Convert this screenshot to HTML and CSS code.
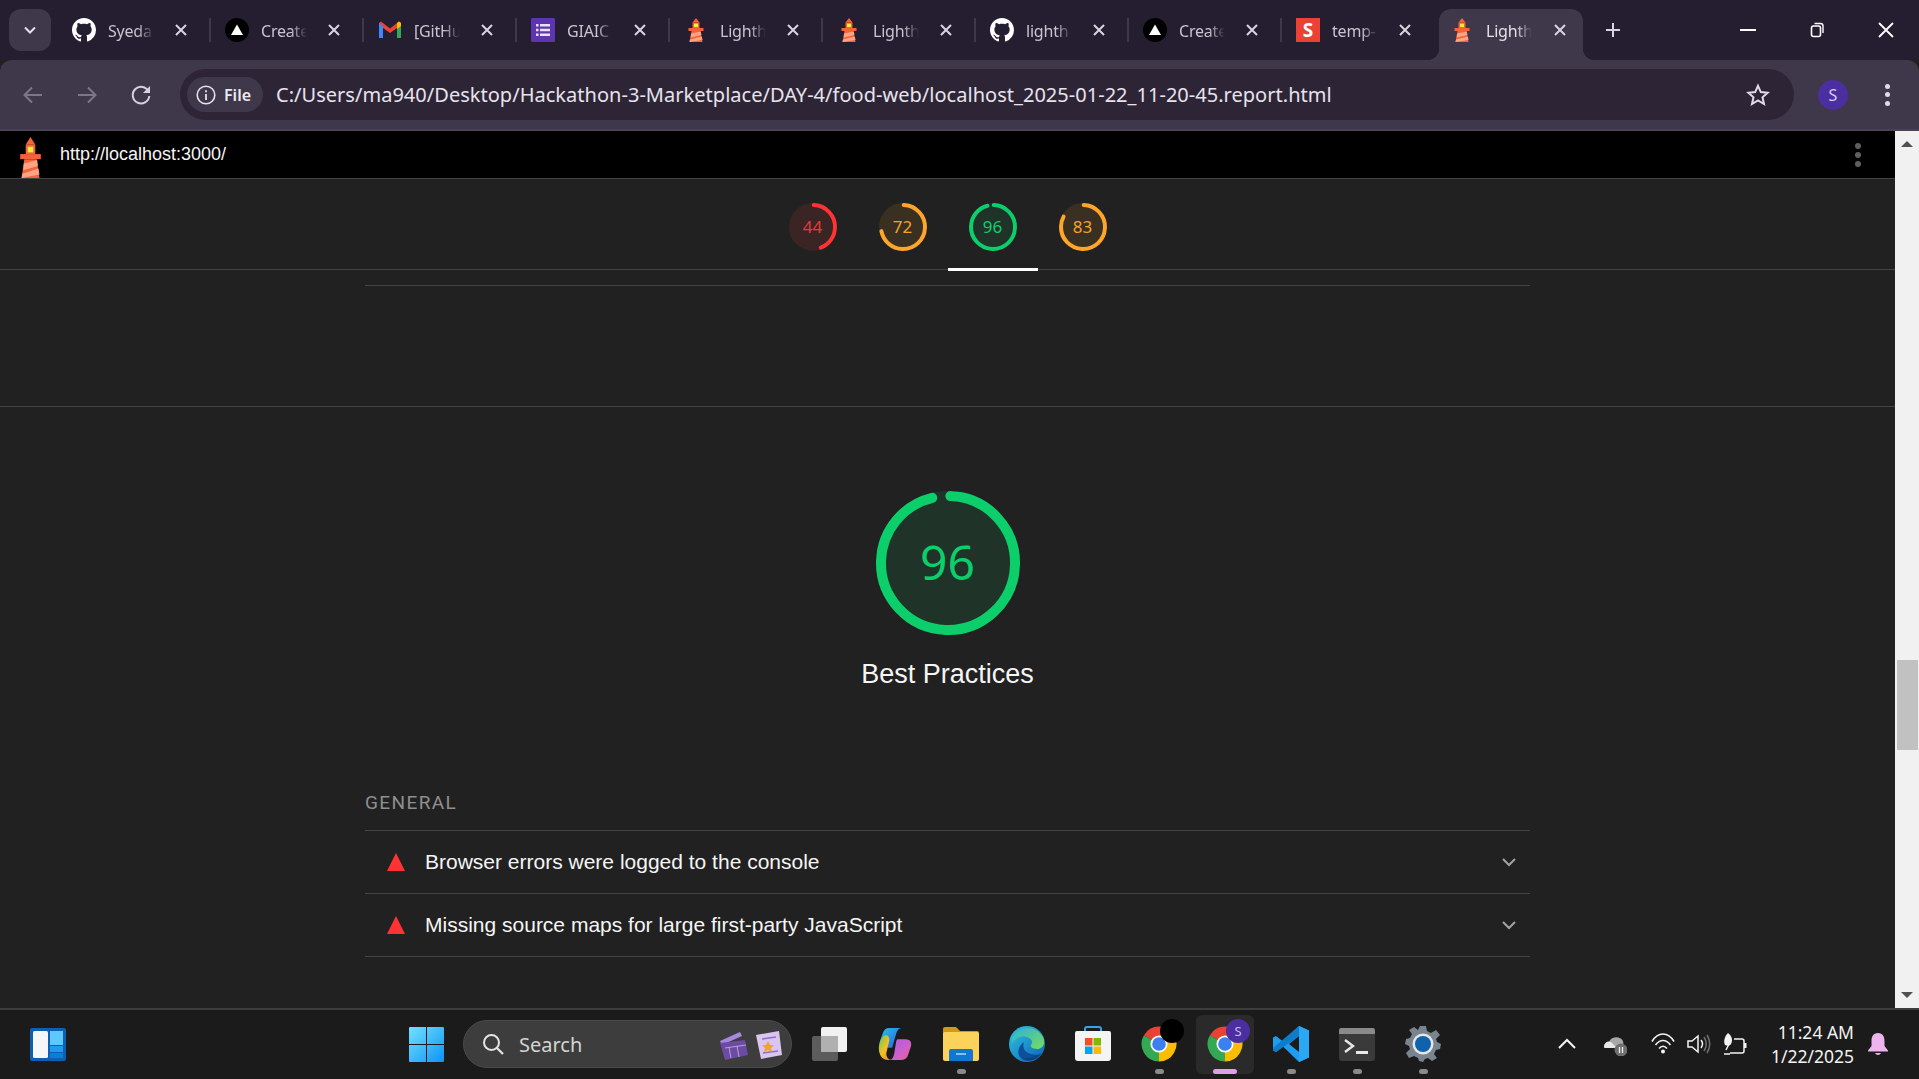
FILE: index.html
```html
<!DOCTYPE html>
<html lang="en">
<head>
    <meta charset="UTF-8">
    <title>Lighthouse Report</title>
    <link rel="stylesheet" href="styles.css">
</head>
<body>

    <!-- shared icons -->
    <svg class="defs" width="0" height="0">
        <symbol id="lighthouse" viewBox="0 0 24 24" preserveAspectRatio="none">
            <polygon points="12,0 15.500,4.500 8.500,4.500" fill="#f4633a"/>
            <rect x="8.500" y="4.500" width="7" height="5.500" fill="#f4633a"/>
            <rect x="10" y="5.700" width="4" height="3.300" fill="#ffeb3b"/>
            <rect x="4.500" y="10" width="15" height="3" fill="#f4633a"/>
            <polygon points="7.500,13 16.500,13 18.500,24 5.500,24" fill="#f4633a"/>
            <polygon points="7.200,15.500 16.800,13.500 17.400,17 6.600,19.500" fill="#ffa385"/>
            <polygon points="6,21.500 17.800,18.500 18.500,22 5.500,24" fill="#ffa385"/>
        </symbol>
        <symbol id="github" viewBox="0 0 16 16">
            <path fill="#fff" d="M8 0C3.58 0 0 3.58 0 8c0 3.54 2.29 6.53 5.47 7.59.4.07.55-.17.55-.38 0-.19-.01-.82-.01-1.49-2.01.37-2.53-.49-2.69-.94-.09-.23-.48-.94-.82-1.13-.28-.15-.68-.52-.01-.53.63-.01 1.08.58 1.23.82.72 1.21 1.87.87 2.33.66.07-.52.28-.87.51-1.07-1.78-.2-3.64-.89-3.64-3.95 0-.87.31-1.59.82-2.15-.08-.2-.36-1.02.08-2.12 0 0 .67-.21 2.2.82.64-.18 1.32-.27 2-.27.68 0 1.36.09 2 .27 1.53-1.04 2.2-.82 2.2-.82.44 1.1.16 1.92.08 2.12.51.56.82 1.27.82 2.15 0 3.07-1.87 3.75-3.65 3.95.29.25.54.73.54 1.48 0 1.07-.01 1.93-.01 2.2 0 .21.15.46.55.38A8.013 8.013 0 0016 8c0-4.42-3.58-8-8-8z"/>
        </symbol>
        <symbol id="vercel" viewBox="0 0 24 24">
            <circle cx="12" cy="12" r="12" fill="#000"/>
            <polygon points="12,6.500 18,17 6,17" fill="#fff"/>
        </symbol>
        <symbol id="close" viewBox="0 0 14 14">
            <path d="M2 2 12 12M12 2 2 12" stroke="#d9d4df" stroke-width="2" fill="none"/>
        </symbol>
        <symbol id="chrome" viewBox="0 0 24 24">
            <path d="M12 12 21.53 6.500A11 11 0 0 0 2.47 6.500Z" fill="#e94235"/>
            <path d="M12 12 2.47 6.500A11 11 0 0 0 12 23Z" fill="#34a853"/>
            <path d="M12 12 12 23A11 11 0 0 0 21.53 6.500Z" fill="#fbbc04"/>
            <circle cx="12" cy="12" r="5.400" fill="#fff"/>
            <circle cx="12" cy="12" r="4.300" fill="#3b7ff0"/>
        </symbol>
    </svg>

    <!-- Tab strip -->
    <div class="tabstrip">
        <button class="tab-menu">
            <svg width="16" height="16" viewBox="0 0 16 16"><path d="M3 5.500 8 10.500 13 5.500" stroke="#e6e1ea" stroke-width="2" fill="none"/></svg>
        </button>
        <div class="tab">
            <svg class="fav"><use href="#github"/></svg><span class="tab-title">Syeda</span>
            <svg class="tab-x"><use href="#close"/></svg>
        </div>
        <div class="tab">
            <svg class="fav"><use href="#vercel"/></svg><span class="tab-title">Create</span>
            <svg class="tab-x"><use href="#close"/></svg>
        </div>
        <div class="tab">
            <svg class="fav" viewBox="0 0 24 24">
                <path d="M1 5V20H5V10L12 15 19 10V20H23V5L21 3.500 12 10.500 3 3.500Z" fill="#ea4335"/>
                <path d="M1 5 1 20H5V8Z" fill="#4285f4"/>
                <path d="M23 5V20H19V8Z" fill="#34a853"/>
                <path d="M19 8 19 5 21 3.500 23 5 23 8 19 11Z" fill="#fbbc04"/>
            </svg><span class="tab-title">[GitHu</span>
            <svg class="tab-x"><use href="#close"/></svg>
        </div>
        <div class="tab">
            <svg class="fav" viewBox="0 0 24 24">
                <rect width="24" height="24" rx="1.500" fill="#5e35b1"/>
                <path d="M5 6h2.500v2.500H5ZM9 6h10v2.500H9ZM5 10.700h2.500v2.500H5ZM9 10.700h10v2.500H9ZM5 15.500h2.500V18H5ZM9 15.500h10V18H9Z" fill="#e8e2f5"/>
            </svg><span class="tab-title">GIAIC</span>
            <svg class="tab-x"><use href="#close"/></svg>
        </div>
        <div class="tab">
            <svg class="fav"><use href="#lighthouse"/></svg><span class="tab-title">Lighth</span>
            <svg class="tab-x"><use href="#close"/></svg>
        </div>
        <div class="tab">
            <svg class="fav"><use href="#lighthouse"/></svg><span class="tab-title">Lighth</span>
            <svg class="tab-x"><use href="#close"/></svg>
        </div>
        <div class="tab">
            <svg class="fav"><use href="#github"/></svg><span class="tab-title">lighth</span>
            <svg class="tab-x"><use href="#close"/></svg>
        </div>
        <div class="tab">
            <svg class="fav"><use href="#vercel"/></svg><span class="tab-title">Create</span>
            <svg class="tab-x"><use href="#close"/></svg>
        </div>
        <div class="tab tab-plain">
            <span class="fav fav-s">S</span><span class="tab-title">temp-</span>
            <svg class="tab-x"><use href="#close"/></svg>
        </div>
        <div class="tab tab-active">
            <svg class="fav"><use href="#lighthouse"/></svg><span class="tab-title">Lighth</span>
            <svg class="tab-x"><use href="#close"/></svg>
        </div>
        <svg class="tab-new" width="18" height="18" viewBox="0 0 18 18"><path d="M9 2V16M2 9H16" stroke="#d9d4df" stroke-width="2"/></svg>

        <div class="win-controls">
            <svg width="16" height="16" viewBox="0 0 16 16"><path d="M0 8H16" stroke="#fff" stroke-width="2"/></svg>
            <svg width="16" height="16" viewBox="0 0 16 16"><rect x="2.500" y="4" width="9" height="10.500" rx="2" stroke="#fff" stroke-width="1.600" fill="none"/><path d="M5.500 1.500H11.500Q14 1.500 14 4V11" stroke="#fff" stroke-width="1.400" fill="none"/></svg>
            <svg width="16" height="16" viewBox="0 0 16 16"><path d="M1 1 15 15M15 1 1 15" stroke="#fff" stroke-width="1.800"/></svg>
        </div>
    </div>

    <!-- Toolbar -->
    <div class="toolbar">
        <div class="nav-btn">
            <svg width="24" height="24" viewBox="0 0 24 24"><path d="M21 12H4M11 4.500 3.500 12 11 19.500" stroke="#7d7688" stroke-width="2" fill="none"/></svg>
        </div>
        <div class="nav-btn">
            <svg width="24" height="24" viewBox="0 0 24 24"><path d="M3 12H20M13 4.500 20.500 12 13 19.500" stroke="#7d7688" stroke-width="2" fill="none"/></svg>
        </div>
        <div class="nav-btn">
            <svg width="24" height="24" viewBox="0 0 24 24"><path d="M19.500 8.500A8.300 8.300 0 1 0 20.300 13" stroke="#d8d2e0" stroke-width="2" fill="none"/><path d="M21 3V10H14Z" fill="#d8d2e0"/></svg>
        </div>
        <div class="omnibox">
            <div class="chip">
                <svg width="20" height="20" viewBox="0 0 20 20"><circle cx="10" cy="10" r="8.800" stroke="#e6e1ea" stroke-width="1.600" fill="none"/><path d="M10 9V15M10 5.200V7.200" stroke="#e6e1ea" stroke-width="1.800"/></svg>
                <span>File</span>
            </div>
            <span class="url">C:/Users/ma940/Desktop/Hackathon-3-Marketplace/DAY-4/food-web/localhost_2025-01-22_11-20-45.report.html</span>
            <svg class="star" width="24" height="24" viewBox="0 0 24 24"><path d="M12 2.800 14.800 9.100 21.600 9.800 16.500 14.300 18 21 12 17.500 6 21 7.500 14.300 2.400 9.800 9.200 9.100Z" stroke="#e0dbe6" stroke-width="2" fill="none"/></svg>
        </div>
        <div class="avatar">S</div>
        <div class="kebab kebab-light"><i></i><i></i><i></i></div>
    </div>

    <!-- Page + scrollbar -->
    <div class="viewport">
        <div class="page">
            <div class="lh-top">
                <svg class="lh-logo"><use href="#lighthouse"/></svg>
                <span class="lh-url">http://localhost:3000/</span>
                <div class="kebab kebab-dim"><i></i><i></i><i></i></div>
            </div>

            <nav class="score-nav">
                <a class="score-tab">
                    <div class="gauge gauge-sm fail">
                        <svg viewBox="0 0 48 48"><circle class="base" cx="24" cy="24" r="22"/><circle class="arc" cx="24" cy="24" r="22" stroke-dasharray="60 200"/></svg>
                        <span>44</span>
                    </div>
                </a>
                <a class="score-tab">
                    <div class="gauge gauge-sm avg">
                        <svg viewBox="0 0 48 48"><circle class="base" cx="24" cy="24" r="22"/><circle class="arc" cx="24" cy="24" r="22" stroke-dasharray="98 200"/></svg>
                        <span>72</span>
                    </div>
                </a>
                <a class="score-tab current">
                    <div class="gauge gauge-sm pass">
                        <svg viewBox="0 0 48 48"><circle class="base" cx="24" cy="24" r="22"/><circle class="arc" cx="24" cy="24" r="22" stroke-dasharray="131 200"/></svg>
                        <span>96</span>
                    </div>
                </a>
                <a class="score-tab">
                    <div class="gauge gauge-sm avg">
                        <svg viewBox="0 0 48 48"><circle class="base" cx="24" cy="24" r="22"/><circle class="arc" cx="24" cy="24" r="22" stroke-dasharray="113 200"/></svg>
                        <span>83</span>
                    </div>
                </a>
            </nav>

            <div class="prev-end"><div class="prev-line"></div></div>

            <section class="category">
                <div class="gauge gauge-lg pass">
                    <svg viewBox="0 0 144 144"><circle class="base" cx="72" cy="72" r="67"/><circle class="arc" cx="72" cy="72" r="67" stroke-dasharray="402 500"/></svg>
                    <span>96</span>
                </div>
                <h2 class="cat-title">Best Practices</h2>

                <div class="audits">
                    <div class="group-title">GENERAL</div>
                    <div class="audit">
                        <i class="tri"></i>
                        <span>Browser errors were logged to the console</span>
                        <svg class="chev" width="14" height="10" viewBox="0 0 14 10"><path d="M1 2 7 8 13 2" stroke="#a3a3a3" stroke-width="2" fill="none"/></svg>
                    </div>
                    <div class="audit">
                        <i class="tri"></i>
                        <span>Missing source maps for large first-party JavaScript</span>
                        <svg class="chev" width="14" height="10" viewBox="0 0 14 10"><path d="M1 2 7 8 13 2" stroke="#a3a3a3" stroke-width="2" fill="none"/></svg>
                    </div>
                </div>
            </section>
        </div>

        <div class="scrollbar">
            <div class="sb-btn"><i class="sb-up"></i></div>
            <div class="sb-thumb"></div>
            <div class="sb-btn sb-end"><i class="sb-down"></i></div>
        </div>
    </div>

    <!-- Windows taskbar -->
    <div class="taskbar">
        <svg class="widgets" width="36" height="33" viewBox="0 0 36 33">
            <rect width="36" height="33" rx="2" fill="#0d5fb3"/>
            <rect x="3" y="3" width="15" height="27" rx="1.500" fill="#f4f6f8"/>
            <rect x="20" y="3" width="13" height="14" fill="#5fc8fa"/>
            <rect x="20" y="18" width="13" height="6" fill="#1f9bec"/>
            <rect x="20" y="25" width="13" height="5" fill="#0a7fd8"/>
        </svg>

        <div class="task-slot">
            <svg width="35" height="35" viewBox="0 0 35 35">
                <defs><linearGradient id="winblue" x1="0" y1="0" x2="1" y2="1"><stop offset="0" stop-color="#6fe2ff"/><stop offset="1" stop-color="#0f93f5"/></linearGradient></defs>
                <path d="M0 1Q0 0 1 0H17V17H0ZM18 0H34Q35 0 35 1V17H18ZM0 18H17V35H1Q0 35 0 34ZM18 18H35V34Q35 35 34 35H18Z" fill="url(#winblue)"/>
            </svg>
        </div>

        <div class="search">
            <svg width="24" height="24" viewBox="0 0 24 24"><circle cx="10.500" cy="10.500" r="7.500" stroke="#e4e4e4" stroke-width="2" fill="none"/><path d="M16 16 22 22" stroke="#e4e4e4" stroke-width="2.200"/></svg>
            <span>Search</span>
            <svg class="search-art" width="68" height="34" viewBox="0 0 68 34">
                <path d="M4 14 24 5 26 9 6 18Z" fill="#a888dd"/>
                <path d="M4 16 29 13 32 28 9 33Z" fill="#6d4ba3"/>
                <path d="M9 21 30 18M13 20 15 31M21 19 23 30" stroke="#b7a2dc" stroke-width="1"/>
                <path d="M40 8 63 4 66 28 45 32Z" fill="#d9c6ef"/>
                <path d="M46 12 60 10M47 26 62 24" stroke="#8e70c0" stroke-width="1.500"/>
                <path d="M52 14 54 18 58 18 55 21 56 25 52 23 48 25 49 21 46 18 50 18Z" fill="#f2a51f"/>
            </svg>
        </div>

        <div class="task-slot">
            <svg width="36" height="36" viewBox="0 0 36 36">
                <rect x="1" y="10" width="26" height="25" rx="2" fill="#5c5c5c"/>
                <rect x="10" y="1" width="26" height="25" rx="2" fill="#f2f2f2"/>
                <rect x="10" y="10" width="17" height="16" fill="#b0b0b0"/>
            </svg>
        </div>
        <div class="task-slot">
            <svg width="34" height="34" viewBox="0 0 36 36">
                <defs>
                    <linearGradient id="cpa" x1="0" y1="0" x2="1" y2="1"><stop offset="0" stop-color="#27c0e8"/><stop offset="1" stop-color="#2a5ee0"/></linearGradient>
                    <linearGradient id="cpb" x1="0" y1="0" x2="1" y2="1"><stop offset="0" stop-color="#5fc86a"/><stop offset=".5" stop-color="#f4c21c"/><stop offset="1" stop-color="#f06a3a"/></linearGradient>
                    <linearGradient id="cpc" x1="0" y1="0" x2="1" y2="1"><stop offset="0" stop-color="#a85be8"/><stop offset=".6" stop-color="#d060c8"/><stop offset="1" stop-color="#f2607a"/></linearGradient>
                </defs>
                <path d="M12 1H25C22 1 20 4 19 8L15 22H7C3 22 1 19 2 15L5 7C6 3 8 1 12 1Z" fill="url(#cpa)"/>
                <path d="M7 9C10 8 12 10 12 14L9 27C8 31 11 35 15 35H11C4 35 0 28 1 20 2 15 4 10 7 9Z" fill="url(#cpb)"/>
                <path d="M21 13H29C34 13 36 16 35 20L32 29C31 33 28 35 24 35H12C14 35 16 33 17 29L19 17C19 15 20 13 21 13Z" fill="url(#cpc)"/>
            </svg>
        </div>
        <div class="task-slot has-dot">
            <svg width="36" height="34" viewBox="0 0 36 34">
                <path d="M0 2Q0 0 2 0H13L17 4H34Q36 4 36 6V10H0Z" fill="#d39a0e"/>
                <rect y="5" width="36" height="29" rx="2" fill="#fcd35a"/>
                <path d="M6 24Q6 22 8 22H28Q30 22 30 24V34H6Z" fill="#1078d0"/>
                <rect x="13" y="26" width="10" height="2" fill="#7cc3f2"/>
            </svg>
        </div>
        <div class="task-slot">
            <svg width="36" height="36" viewBox="0 0 36 36">
                <defs>
                    <linearGradient id="edgeb" x1="0" y1="0" x2="1" y2="1"><stop offset="0" stop-color="#2fc4e0"/><stop offset="1" stop-color="#0b62b6"/></linearGradient>
                    <linearGradient id="edgeg" x1="0" y1="0" x2="1" y2="1"><stop offset="0" stop-color="#2cb3d8"/><stop offset="1" stop-color="#79dc5c"/></linearGradient>
                </defs>
                <circle cx="18" cy="18" r="18" fill="url(#edgeb)"/>
                <path d="M3 12C7 1 26-3 34 11 37 17 34 23 28 23 23 23 20 21 23 17 24 13 17 9 11 11 7 12 4 15 3 18Z" fill="url(#edgeg)"/>
                <path d="M32 28C27 35 18 37 13 33 7 29 9 20 15 16 13 22 16 27 22 28 26 29 30 29 32 28Z" fill="#0c4f9a"/>
                <path d="M33 27C28 34 19 36 14 32 19 33 26 31 33 27Z" fill="#1b1b1b" opacity=".25"/>
            </svg>
        </div>
        <div class="task-slot">
            <svg width="36" height="36" viewBox="0 0 36 36">
                <path d="M10 7V3Q10 1 12 1H24Q26 1 26 3V7" stroke="#3aa0e8" stroke-width="2" fill="none"/>
                <path d="M2 5H34Q36 5 36 7V32Q36 35 33 35H3Q0 35 0 32V7Q0 5 2 5Z" fill="#f4f4f4"/>
                <rect x="10" y="12" width="7.500" height="7.500" fill="#f25022"/>
                <rect x="18.500" y="12" width="7.500" height="7.500" fill="#7fba00"/>
                <rect x="10" y="20.500" width="7.500" height="7.500" fill="#00a4ef"/>
                <rect x="18.500" y="20.500" width="7.500" height="7.500" fill="#ffb900"/>
            </svg>
        </div>
        <div class="task-slot has-dot">
            <div class="chrome-wrap">
                <svg class="chrome-ic"><use href="#chrome"/></svg>
                <i class="badge badge-black"></i>
            </div>
        </div>
        <div class="task-slot slot-active">
            <div class="chrome-wrap">
                <svg class="chrome-ic"><use href="#chrome"/></svg>
                <i class="badge badge-s">S</i>
            </div>
        </div>
        <div class="task-slot has-dot">
            <svg width="36" height="36" viewBox="0 0 36 36">
                <path d="M26 0 36 4.500V31.500L26 36 10 20.500 3 26 0 24.500V11.500L3 10 10 15.500ZM26 10 16 18 26 26Z" fill="#1f9cf0"/>
                <path d="M26 0V10L3 26 0 24.500V22Z" fill="#0e7dc9"/>
                <path d="M36 4.500V31.500L26 36V0Z" fill="#2aa7f5"/>
            </svg>
        </div>
        <div class="task-slot has-dot">
            <svg width="36" height="33" viewBox="0 0 36 33">
                <rect width="36" height="33" rx="3" fill="#3a3a3a"/>
                <path d="M2 0H34Q36 0 36 3V6H0V3Q0 0 2 0Z" fill="#8a8a8a"/>
                <path d="M6 12 14 18 6 24" stroke="#e8e8e8" stroke-width="2.400" fill="none"/>
                <rect x="17" y="23" width="12" height="3" fill="#e8e8e8"/>
            </svg>
        </div>
        <div class="task-slot has-dot">
            <svg width="36" height="36" viewBox="0 0 36 36">
                <path d="M15 0H21L22 5 26 7 31 4 35 9 31 13 32 16 36 18 35 23 31 24 29 28 32 32 27 35 23 32 20 33 18 36 14 35 13 32 9 30 4 32 1 27 5 23 4 20 0 18 1 13 5 12 7 8 4 4 9 1 13 4Z" fill="#79848f"/>
                <circle cx="18" cy="18" r="10.500" fill="#e6e6e6"/>
                <circle cx="18" cy="18" r="8" fill="#0f62ac"/>
            </svg>
        </div>

        <div class="tray">
            <svg class="tray-ic" viewBox="0 0 24 24"><path d="M4 16 12 8 20 16" stroke="#f4f4f4" stroke-width="2" fill="none"/></svg>
            <svg class="tray-ic tray-far" viewBox="0 0 24 24">
                <path d="M1 15A5 5 0 0 1 6 10 8 8 0 0 1 20 9L21 16H3Q1 16 1 15Z" fill="#a8a8a8"/>
                <path d="M1 15A5 5 0 0 1 8 10L14 16H3Q1 16 1 15Z" fill="#e8e8e8"/>
                <circle cx="18" cy="18" r="6.500" fill="#6f6f6f"/>
                <path d="M16.500 15V21M19.500 15V21" stroke="#f0f0f0" stroke-width="1.300"/>
            </svg>
            <svg class="tray-ic tray-far" viewBox="0 0 24 24">
                <path d="M1 9.500C7-.5 17-.5 23 9.500M4.500 13C9 7 15 7 19.500 13M8 16.500C10.500 13.500 13.500 13.500 16 16.500" stroke="#f4f4f4" stroke-width="1.600" fill="none"/>
                <circle cx="12" cy="19.500" r="2" fill="#f4f4f4"/>
            </svg>
            <svg class="tray-ic" viewBox="0 0 24 24">
                <path d="M1 9H5L11 4V20L5 15H1Z" stroke="#f4f4f4" stroke-width="1.500" fill="none"/>
                <path d="M14 8Q17 12 14 16" stroke="#f4f4f4" stroke-width="1.500" fill="none"/>
                <path d="M17 5Q21.500 12 17 19M20 3Q25.500 12 20 21" stroke="#707070" stroke-width="1.500" fill="none"/>
            </svg>
            <svg class="tray-ic" viewBox="0 0 24 24">
                <path d="M7 21H19Q21 21 21 19V9Q21 7 19 7H11" stroke="#f4f4f4" stroke-width="1.500" fill="none"/>
                <rect x="21" y="11" width="2.500" height="5" fill="#f4f4f4"/>
                <path d="M5 1C9 4 10 8 8 12 7 14 4 14 2 13 0 9 2 4 5 1Z" fill="#f4f4f4"/>
                <path d="M1 22 H7 M3 18 7 10" stroke="#f4f4f4" stroke-width="1.500"/>
            </svg>
            <div class="clock">
                <span>11:24 AM</span>
                <span>1/22/2025</span>
            </div>
            <svg class="tray-ic" viewBox="0 0 24 24">
                <path d="M12 1C7 1 5.500 5 5.500 9V14L2 18.500V19.500H22V18.500L18.500 14V9C18.500 5 17 1 12 1Z" fill="#efb3ee"/>
                <path d="M9 21H15Q14 23 12 23 10 23 9 21Z" fill="#efb3ee"/>
            </svg>
        </div>
    </div>

</body>
</html>
```

FILE: styles.css
```css
* {
    margin: 0;
    padding: 0;
    box-sizing: border-box;
}

html, body {
    width: 1919px;
    height: 1079px;
    overflow: hidden;
    background-color: #212121;
    font-family: 'Noto Sans', sans-serif;
    display: flex;
    flex-direction: column;
}

.defs {
    position: absolute;
}

/* ---- tab strip ---- */
.tabstrip {
    height: 60px;
    flex: none;
    background-color: #241e30;
    display: flex;
    align-items: center;
}

.tab-menu {
    width: 42px;
    height: 42px;
    margin: 0 7px 0 9px;
    border: none;
    border-radius: 12px;
    background-color: #3f384a;
    display: flex;
    align-items: center;
    justify-content: center;
}

.tab {
    width: 153px;
    height: 24px;
    padding: 0 21px 0 14px;
    border-right: 2px solid #3f384a;
    display: flex;
    align-items: center;
    flex: none;
}

.tab-plain {
    border-right-color: transparent;
}

.fav {
    width: 24px;
    height: 24px;
    flex: none;
    margin-right: 12px;
}

.fav-s {
    background-color: #ea4335;
    color: #fff;
    font-weight: 700;
    font-size: 19px;
    line-height: 24px;
    text-align: center;
}

.tab-title {
    width: 46px;
    margin-top: 2px;
    white-space: nowrap;
    font-size: 16px;
    letter-spacing: -0.2px;
    line-height: 24px;
    color: #c9c4cf;
    -webkit-mask-image: linear-gradient(90deg, #000 65%, transparent);
    mask-image: linear-gradient(90deg, #000 65%, transparent);
}

.tab-x {
    width: 14px;
    height: 14px;
    margin-left: auto;
    flex: none;
}

.tab-active {
    position: relative;
    width: 144px;
    height: 51px;
    margin: 9px 5px 0 4px;
    padding: 0 16px 0 11px;
    border: none;
    border-radius: 12px 12px 0 0;
    background-color: #3f384a;
    padding-bottom: 9px;
}

.tab-active::before,
.tab-active::after {
    content: "";
    position: absolute;
    bottom: 0;
    width: 12px;
    height: 12px;
}

.tab-active::before {
    left: -12px;
    background: radial-gradient(circle at 0 0, transparent 12px, #3f384a 12.5px);
}

.tab-active::after {
    right: -12px;
    background: radial-gradient(circle at 100% 0, transparent 12px, #3f384a 12.5px);
}

.tab-active .tab-title {
    color: #e4e0e9;
}

.tab-new {
    margin-left: 16px;
}

.win-controls {
    margin-left: auto;
    padding-right: 25px;
    display: flex;
    gap: 53px;
}

/* ---- toolbar ---- */
.toolbar {
    height: 71px;
    flex: none;
    background-color: #3f384a;
    border-bottom: 2px solid #4a4356;
    border-radius: 12px 12px 0 0;
    padding: 0 29px 0 6px;
    display: flex;
    align-items: center;
}

.nav-btn {
    width: 54px;
    display: flex;
    justify-content: center;
}

.omnibox {
    flex: 1;
    height: 51px;
    margin-left: 12px;
    border-radius: 26px;
    background-color: #2d2536;
    display: flex;
    align-items: center;
}

.chip {
    width: 76px;
    height: 35px;
    margin-left: 7px;
    border-radius: 18px;
    background-color: #3f384a;
    display: flex;
    align-items: center;
    padding-left: 9px;
    gap: 8px;
    color: #ece8f0;
    font-size: 16px;
    font-weight: 600;
}

.url {
    margin-left: 13px;
    font-size: 20px;
    letter-spacing: 0.025px;
    color: #e7e3ec;
    white-space: nowrap;
}

.star {
    margin-left: auto;
    margin-right: 24px;
}

.avatar {
    width: 30px;
    height: 30px;
    margin-left: 24px;
    border-radius: 50%;
    background-color: #4b2ea0;
    color: #d8cdf5;
    font-size: 16px;
    line-height: 30px;
    text-align: center;
}

.kebab {
    display: flex;
    flex-direction: column;
}

.kebab i {
    display: block;
    border-radius: 50%;
}

.kebab-light {
    margin-left: 37px;
    gap: 3.5px;
}

.kebab-light i {
    width: 5px;
    height: 5px;
    background-color: #e0dbe6;
}

.kebab-dim {
    margin-left: auto;
    margin-right: 34px;
    gap: 3px;
}

.kebab-dim i {
    width: 6px;
    height: 6px;
    background-color: #5f5f5f;
}

/* ---- report page ---- */
.viewport {
    height: 877px;
    flex: none;
    display: flex;
}

.page {
    flex: 1;
    min-width: 0;
    background-color: #212121;
}

.lh-top {
    height: 48px;
    background-color: #000;
    border-bottom: 1px solid #444;
    overflow: hidden;
    display: flex;
    align-items: center;
    padding-left: 14px;
}

.lh-logo {
    width: 33px;
    height: 41px;
    align-self: flex-start;
    margin-top: 6px;
    flex: none;
}

.lh-url {
    margin-left: 13px;
    font-family: 'Liberation Sans', Arial, sans-serif;
    font-size: 18px;
    color: #f5f5f5;
}

.score-nav {
    height: 91px;
    border-bottom: 1px solid #444;
    display: flex;
    justify-content: center;
}

.score-tab {
    width: 90px;
    height: 92px;
    padding-top: 24px;
    display: flex;
    justify-content: center;
}

.score-tab.current {
    border-bottom: 3px solid #fff;
}

.gauge {
    display: grid;
    place-items: center;
    flex: none;
}

.gauge > * {
    grid-area: 1 / 1;
}

.gauge span {
    position: relative;
    z-index: 1;
}

.gauge svg {
    width: 100%;
    height: 100%;
    transform: rotate(-88deg);
}

.gauge circle {
    fill: none;
}

.gauge-sm {
    width: 48px;
    height: 48px;
    font-size: 17px;
}

.gauge-sm span {
    margin-bottom: 1px;
}

.gauge-sm circle.arc {
    stroke-width: 4;
    stroke-linecap: round;
}

.gauge-sm circle.base {
    stroke-width: 4;
}

.gauge-lg {
    width: 144px;
    height: 144px;
    margin: 0 auto;
    font-size: 48px;
}

.gauge-lg span {
    margin-bottom: 4px;
}

.gauge-lg circle.arc {
    stroke-width: 10;
    stroke-linecap: round;
}

.gauge-lg circle.base {
    stroke-width: 10;
}

.fail { color: #e53935; }
.fail circle.base { fill: #3a2424; stroke: #3a2424; }
.fail circle.arc { stroke: #ff3333; fill: none; }

.avg { color: #f4a32a; }
.avg circle.base { fill: #3a3022; stroke: #3a3022; }
.avg circle.arc { stroke: #ffa52a; fill: none; }

.pass { color: #0cce6b; }
.pass circle.base { fill: #1f3329; stroke: #1f3329; }
.pass circle.arc { stroke: #0cce6b; fill: none; }

.prev-end {
    height: 137px;
    border-bottom: 1px solid #444;
}

.prev-line {
    width: 1165px;
    height: 16px;
    margin: 0 auto;
    border-bottom: 1px solid #444;
}

.category {
    padding-top: 84px;
}

.cat-title {
    margin-top: 19px;
    font-family: 'Liberation Sans', Arial, sans-serif;
    font-size: 27px;
    font-weight: 400;
    line-height: 40px;
    color: #f5f5f5;
    text-align: center;
}

.audits {
    width: 1165px;
    margin: 100px auto 0;
}

.group-title {
    height: 37px;
    font-family: Roboto, sans-serif;
    font-size: 19px;
    line-height: 18px;
    letter-spacing: 1.4px;
    color: #8f8f8f;
    border-bottom: 1px solid #444;
}

.audit {
    height: 63px;
    padding: 0 14px 0 22px;
    border-bottom: 1px solid #444;
    display: flex;
    align-items: center;
    font-family: 'Liberation Sans', Arial, sans-serif;
    font-size: 21px;
    color: #f5f5f5;
}

.tri {
    width: 0;
    height: 0;
    margin-right: 20px;
    border-left: 9px solid transparent;
    border-right: 9px solid transparent;
    border-bottom: 18px solid #ff3333;
}

.chev {
    margin-left: auto;
}

/* ---- page scrollbar ---- */
.scrollbar {
    width: 24px;
    background-color: #f1f1f1;
    display: flex;
    flex-direction: column;
    align-items: center;
}

.sb-btn {
    height: 26px;
    flex: none;
    display: flex;
    align-items: center;
    justify-content: center;
}

.sb-end {
    margin-top: auto;
}

.sb-up, .sb-down {
    width: 0;
    height: 0;
    border-left: 6px solid transparent;
    border-right: 6px solid transparent;
}

.sb-up {
    border-bottom: 6px solid #505050;
}

.sb-down {
    border-top: 6px solid #505050;
}

.sb-thumb {
    width: 21px;
    height: 90px;
    margin-top: 503px;
    background-color: #c1c1c1;
}

/* ---- taskbar ---- */
.taskbar {
    height: 71px;
    flex: none;
    background-color: #1b1b1b;
    border-top: 2px solid #3d3d3d;
    padding-bottom: 1px;
    display: flex;
    align-items: center;
}

.widgets {
    margin: 0 327px 0 30px;
    flex: none;
}

.task-slot {
    position: relative;
    width: 66px;
    height: 59px;
    flex: none;
    display: flex;
    align-items: center;
    justify-content: center;
}

.has-dot::after {
    content: "";
    position: absolute;
    left: 29px;
    bottom: 0;
    width: 9px;
    height: 5px;
    border-radius: 3px;
    background-color: #8a8a8a;
}

.slot-active::before {
    content: "";
    position: absolute;
    left: 4px;
    right: 4px;
    top: 0;
    bottom: 0;
    border-radius: 6px;
    background-color: #2a2a2a;
}

.slot-active::after {
    content: "";
    position: absolute;
    left: 21px;
    bottom: 0;
    width: 24px;
    height: 5px;
    border-radius: 3px;
    background-color: #dda0e6;
}

.search {
    width: 329px;
    height: 48px;
    margin: 0 4px;
    flex: none;
    border-radius: 24px;
    background-color: #3d3d3d;
    border: 1px solid #4a4a4a;
    display: flex;
    align-items: center;
    padding-left: 17px;
    color: #d4d4d4;
    font-size: 20px;
}

.search span {
    margin-left: 14px;
}

.search-art {
    margin-left: auto;
    margin-right: 7px;
}

.chrome-wrap {
    position: relative;
    width: 36px;
    height: 36px;
}

.chrome-ic {
    width: 38px;
    height: 38px;
    margin: -1px;
    display: block;
}

.badge {
    position: absolute;
    top: -7px;
    right: -7px;
    width: 24px;
    height: 24px;
    border-radius: 50%;
    font-style: normal;
    font-size: 13px;
    line-height: 24px;
    text-align: center;
}

.badge-black {
    background-color: #000;
}

.badge-s {
    background-color: #4b2ea0;
    color: #c9b8f0;
}

.tray {
    margin-left: auto;
    padding-right: 29px;
    display: flex;
    align-items: center;
    gap: 12px;
}

.tray-ic {
    width: 24px;
    height: 24px;
    flex: none;
}

.tray-far {
    margin-left: 12px;
}

.clock {
    width: 95px;
    display: flex;
    flex-direction: column;
    align-items: flex-end;
    font-size: 17.5px;
    line-height: 24px;
    color: #f2f2f2;
    white-space: nowrap;
}
```
